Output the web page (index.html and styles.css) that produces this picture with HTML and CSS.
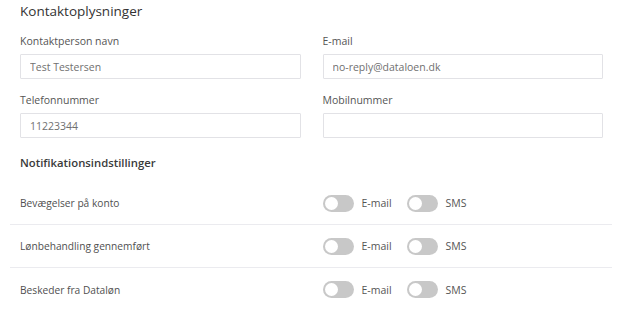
FILE: index.html
```html
<!DOCTYPE html>
<html lang="da">
<head>
    <meta charset="UTF-8">
    <meta name="viewport" content="width=device-width, initial-scale=1.0">
    <title>Kontaktoplysninger</title>
    <link rel="stylesheet" href="styles.css">
</head>
<body>
    <div class="page">
        <!-- Kontaktoplysninger -->
        <section class="contact">
            <h2 class="section-title">Kontaktoplysninger</h2>

            <div class="field-grid">
                <div class="field">
                    <label for="contact_name">Kontaktperson navn</label>
                    <input type="text" id="contact_name" value="Test Testersen">
                </div>
                <div class="field">
                    <label for="contact_email">E-mail</label>
                    <input type="text" id="contact_email" value="no-reply@dataloen.dk">
                </div>
                <div class="field">
                    <label for="contact_phone">Telefonnummer</label>
                    <input type="text" id="contact_phone" value="11223344">
                </div>
                <div class="field">
                    <label for="contact_mobile">Mobilnummer</label>
                    <input type="text" id="contact_mobile" value="">
                </div>
            </div>
        </section>

        <!-- Notifikationsindstillinger -->
        <section class="notifications">
            <h3 class="sub-title">Notifikationsindstillinger</h3>

            <ul class="notify-list">
                <li class="notify-row">
                    <span class="notify-label">Bevægelser på konto</span>
                    <div class="switches">
                        <label class="switch"><span class="track"></span>E-mail</label>
                        <label class="switch"><span class="track"></span>SMS</label>
                    </div>
                </li>
                <li class="notify-row">
                    <span class="notify-label">Lønbehandling gennemført</span>
                    <div class="switches">
                        <label class="switch"><span class="track"></span>E-mail</label>
                        <label class="switch"><span class="track"></span>SMS</label>
                    </div>
                </li>
                <li class="notify-row">
                    <span class="notify-label">Beskeder fra Dataløn</span>
                    <div class="switches">
                        <label class="switch"><span class="track"></span>E-mail</label>
                        <label class="switch"><span class="track"></span>SMS</label>
                    </div>
                </li>
            </ul>
        </section>
    </div>
</body>
</html>
```

FILE: styles.css
```css
/* Basic Reset */
* {
    margin: 0;
    padding: 0;
    box-sizing: border-box;
    font-family: 'Open Sans', 'Liberation Sans', sans-serif;
}

body {
    background-color: #ffffff;
    color: #333;
}

/* Page wrapper */
.page {
    padding: 2px 9px 0 10px;
}

/* Contact section */
.contact {
    padding: 0 9px 0 10px;
}

.section-title {
    font-size: 13.5px;
    line-height: 19px;
    font-weight: 400;
    color: #333;
    margin-bottom: 13px;
}

.field-grid {
    display: grid;
    grid-template-columns: 1fr 1fr;
    column-gap: 22px;
    row-gap: 14px;
}

.field label {
    display: block;
    font-size: 10.5px;
    line-height: 15px;
    color: #555;
    margin-bottom: 5px;
}

.field input {
    display: block;
    width: 100%;
    height: 25px;
    padding: 0 9px;
    border: 1px solid #e2e2e6;
    border-radius: 1px;
    font-size: 10.5px;
    color: #707070;
    background-color: #fff;
    outline: none;
}

/* Notifications */
.sub-title {
    padding: 0 9px 0 10px;
    margin-top: 17px;
    font-size: 11.3px;
    line-height: 16px;
    font-weight: 600;
    color: #3a3a3a;
}

.notify-list {
    list-style: none;
    margin-top: 11px;
}

.notify-row {
    display: grid;
    grid-template-columns: 1fr 1fr;
    column-gap: 22px;
    align-items: center;
    height: 43px;
    padding: 0 9px 0 10px;
    border-bottom: 1px solid #ebebef;
}
.notify-row:last-child {
    border-bottom: none;
}

.notify-label {
    font-size: 10.2px;
    color: #505050;
}

.switches {
    display: flex;
    align-items: center;
    gap: 15px;
}

.switch {
    display: flex;
    align-items: center;
    gap: 8px;
    font-size: 10.5px;
    color: #555;
    cursor: pointer;
}

.track {
    position: relative;
    width: 31px;
    height: 17px;
    border-radius: 9px;
    background-color: #c8c8c8;
}
.track::after {
    content: "";
    position: absolute;
    left: 2px;
    top: 2px;
    width: 13px;
    height: 13px;
    border-radius: 50%;
    background-color: #fff;
}
```
